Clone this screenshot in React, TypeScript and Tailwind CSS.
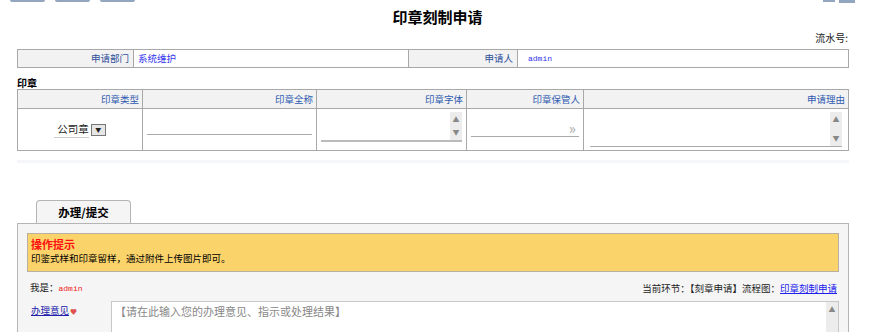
import React from "react";

const cjk = { fontFamily: '"Noto Sans CJK SC", "Liberation Sans", sans-serif' };
const mono = { fontFamily: '"Liberation Mono", "DejaVu Sans Mono", monospace' };

function ScrollBox({ h }: { h: string }) {
  return (
    <div className={`flex w-[12px] flex-col items-center justify-between bg-[#ececec] py-[4px] text-[7px] leading-none text-[#888] ${h}`}>
      <span>▲</span>
      <span>▼</span>
    </div>
  );
}

export default function App() {
  return (
    <div className="relative h-[332px] w-[875px] overflow-hidden bg-white text-[9.5px] text-[#222]" style={cjk}>
      {/* cropped top buttons */}
      <div className="flex h-[3px] gap-[10px] pl-[10px]">
        <div className="h-[2px] w-[35px] rounded-b-sm bg-[#93a6bf]" />
        <div className="h-[2px] w-[35px] rounded-b-sm bg-[#93a6bf]" />
        <div className="h-[2px] w-[35px] rounded-b-sm bg-[#93a6bf]" />
        <div className="ml-auto mr-[20px] flex gap-[4px]">
          <div className="h-[2px] w-[12px] bg-[#93a6bf]" />
          <div className="h-[3px] w-[16px] bg-[#93a6bf]" />
        </div>
      </div>

      <div className="mt-[4px] text-center text-[15px] font-bold leading-[20px] text-black">印章刻制申请</div>
      <div className="mt-[5px] pr-[27px] text-right text-[10px] leading-[12px]">流水号:</div>

      {/* info table */}
      <div className="ml-[17px] mt-[5px] flex h-[19px] w-[832px] border border-[#a8a8a8]">
        <div className="w-[116px] border-r border-[#a8a8a8] bg-[#f2f2f2] pr-[4px] text-right leading-[17px] text-[#2f4f9a]">申请部门</div>
        <div className="w-[275px] border-r border-[#a8a8a8] pl-[4px] leading-[17px] text-[#3333ee]">系统维护</div>
        <div className="w-[109px] border-r border-[#a8a8a8] bg-[#f2f2f2] pr-[4px] text-right leading-[17px] text-[#2f4f9a]">申请人</div>
        <div className="flex-1 pl-[10px] text-[8px] leading-[17px] text-[#3333ee]" style={mono}>admin</div>
      </div>

      <div className="ml-[17px] mt-[9px] text-[10px] font-bold leading-[12px] text-black">印章</div>

      {/* seal table */}
      <div className="ml-[17px] w-[832px] border border-[#a8a8a8]">
        <div className="flex h-[19px] border-b border-[#a8a8a8] bg-[#f2f2f2] leading-[18px] text-[#2f5bb0]">
          <div className="w-[125px] border-r border-[#a8a8a8] pr-[3px] text-right">印章类型</div>
          <div className="w-[174px] border-r border-[#a8a8a8] pr-[3px] text-right">印章全称</div>
          <div className="w-[150px] border-r border-[#a8a8a8] pr-[3px] text-right">印章字体</div>
          <div className="w-[117px] border-r border-[#a8a8a8] pr-[3px] text-right">印章保管人</div>
          <div className="flex-1 pr-[3px] text-right">申请理由</div>
        </div>
        <div className="flex h-[41px]">
          <div className="flex w-[125px] items-center justify-center border-r border-[#a8a8a8]">
            <span className="border-b border-[#ccc] pl-[3px] text-[10.5px] leading-[16px]">公司章</span>
            <span className="ml-[2px] flex h-[12px] w-[15px] items-center justify-center border border-[#777] bg-[#e6e6e6] text-[6px] leading-none">▼</span>
          </div>
          <div className="flex w-[174px] items-end border-r border-[#a8a8a8] px-[4px] pb-[15px]">
            <div className="w-full border-b border-[#aaa]" />
          </div>
          <div className="flex w-[150px] border-r border-[#a8a8a8] px-[4px] pb-[8px] pt-[3px]">
            <div className="flex flex-1 border-b-2 border-[#bbb]">
              <div className="flex-1" />
              <ScrollBox h="h-full" />
            </div>
          </div>
          <div className="flex w-[117px] items-end border-r border-[#a8a8a8] px-[4px] pb-[13px]">
            <div className="relative w-full border-b border-[#aaa]">
              <span className="absolute bottom-[1px] right-[3px] text-[15px] leading-none text-[#aaa]">»</span>
            </div>
          </div>
          <div className="flex flex-1 px-[6px] pb-[3px] pt-[3px]">
            <div className="flex flex-1 border-b border-[#aaa]">
              <div className="flex-1" />
              <ScrollBox h="h-full" />
            </div>
          </div>
        </div>
      </div>

      <div className="ml-[17px] mt-[9px] h-[3px] w-[832px] bg-[#f5f6fa]" />

      {/* tab */}
      <div className="ml-[36px] mt-[37px] flex h-[24px] w-[95px] items-center justify-center rounded-t-[4px] border border-b-0 border-[#b5b5b5] bg-[#f5f5f5] text-[11.5px] font-bold text-black">
        办理/提交
      </div>
      <div className="-mt-px ml-[17px] w-[832px] border border-[#b5b5b5] bg-[#f5f5f5] px-[9px] pt-[9px] pb-[20px]">
        <div className="h-[39px] border border-[#b8b0a0] bg-[#fbd36b] pl-[3px] pt-[2px]">
          <div className="text-[11px] font-bold leading-[16px] text-[#ff1010]">操作提示</div>
          <div className="leading-[12px] text-black">印鉴式样和印章留样，通过附件上传图片即可。</div>
        </div>
        <div className="mt-[8px] flex items-center justify-between leading-[14px]">
          <div className="pl-[3px]">
            我是：<span className="text-[8px] text-[#ee2222]" style={mono}>admin</span>
          </div>
          <div className="pr-[2px]">
            当前环节：【刻章申请】流程图：<span className="text-[#2020ee] underline">印章刻制申请</span>
          </div>
        </div>
        <div className="mt-[5px] flex">
          <div className="w-[84px] pl-[4px] pt-[2px] leading-[14px]">
            <span className="text-[#2020aa] underline">办理意见</span>
            <span className="ml-[1px] text-[7px] text-[#e05050]">♥</span>
          </div>
          <div className="flex h-[50px] flex-1 border border-[#c8c8c8] bg-white">
            <div className="flex-1 pl-[3px] pt-[1px] text-[11px] leading-[16px] text-[#888]">【请在此输入您的办理意见、指示或处理结果】</div>
            <div className="flex w-[12px] flex-col items-center bg-[#ececec] pt-[4px] text-[7px] leading-none text-[#888]">▲</div>
          </div>
        </div>
      </div>
    </div>
  );
}
